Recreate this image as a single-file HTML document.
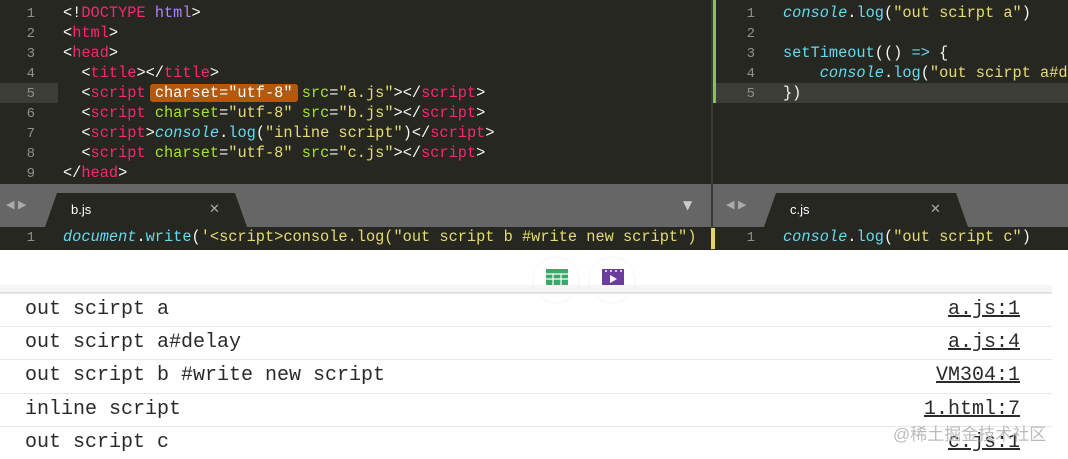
<!DOCTYPE html>
<html><head><meta charset="utf-8"><style>
*{margin:0;padding:0;box-sizing:border-box}
body{width:1068px;height:457px;background:#fff;position:relative;overflow:hidden;font-family:"Liberation Mono",monospace}
.ed{position:absolute;background:#262721}
.ln{position:absolute;color:#8f908a;font-size:14px;width:30px;text-align:right}
.c{position:absolute;white-space:pre;font-size:15.3px;color:#f8f8f2;line-height:20px}
.t{color:#f92672}.a{color:#a6e22e}.s{color:#e6db74}.k{color:#66d9ef;font-style:italic}.b{color:#66d9ef}
.tabbar{position:absolute;top:184px;height:43px;background:#666}
.tab{position:absolute;top:193px;height:34px;background:#262721;clip-path:polygon(12px 0,calc(100% - 12px) 0,100% 100%,0 100%);font-family:"Liberation Sans",sans-serif;color:#fff;font-size:13px}
.row{position:absolute;left:0;width:1052px;height:33px;border-top:1px solid #e8e8e8;font-size:20px;font-family:"Liberation Mono",monospace;color:#2a2a2a}
.row span{position:absolute;top:4px}
.src{right:32px;text-decoration:underline}
</style></head><body>
<div class="ed" style="left:0;top:0;width:711px;height:184px"></div>
<div class="ed" style="left:713px;top:0;width:355px;height:184px"></div>
<div style="position:absolute;left:711px;top:0;width:2px;height:184px;background:#3a3a36"></div>
<div style="position:absolute;left:0;top:83px;width:58px;height:20px;background:#3c3d37"></div>
<div style="position:absolute;left:716px;top:83px;width:352px;height:20px;background:#3c3d37"></div>
<div style="position:absolute;left:713px;top:0;width:3px;height:103px;background:#8bc34a"></div>
<div class="ln" style="left:5px;top:4px;line-height:20px">1<br>2<br>3<br>4<br>5<br>6<br>7<br>8<br>9</div>
<div style="position:absolute;left:150px;top:84px;width:148px;height:18px;background:#b3590f;border-radius:3px"></div>
<div class="c" style="left:63px;top:3px">&lt;!<span class="t">DOCTYPE</span> <span style="color:#ae81ff">html</span>&gt;
&lt;<span class="t">html</span>&gt;
&lt;<span class="t">head</span>&gt;
  &lt;<span class="t">title</span>&gt;&lt;/<span class="t">title</span>&gt;
  &lt;<span class="t">script</span> <span style="color:#fff">charset="utf-8"</span> <span class="a">src</span>=<span class="s">"a.js"</span>&gt;&lt;/<span class="t">script</span>&gt;
  &lt;<span class="t">script</span> <span class="a">charset</span>=<span class="s">"utf-8"</span> <span class="a">src</span>=<span class="s">"b.js"</span>&gt;&lt;/<span class="t">script</span>&gt;
  &lt;<span class="t">script</span>&gt;<span class="k">console</span>.<span class="b">log</span>(<span class="s">"inline script"</span>)&lt;/<span class="t">script</span>&gt;
  &lt;<span class="t">script</span> <span class="a">charset</span>=<span class="s">"utf-8"</span> <span class="a">src</span>=<span class="s">"c.js"</span>&gt;&lt;/<span class="t">script</span>&gt;
&lt;/<span class="t">head</span>&gt;</div>
<div class="ln" style="left:725px;top:4px;line-height:20px">1<br>2<br>3<br>4<br>5</div>
<div style="position:absolute;left:783px;top:0;width:285px;height:184px;overflow:hidden">
<div class="c" style="left:0;top:3px"><span class="k">console</span>.<span class="b">log</span>(<span class="s">"out scirpt a"</span>)

<span class="b">setTimeout</span>(() <span class="b">=&gt;</span> {
    <span class="k">console</span>.<span class="b">log</span>(<span class="s">"out scirpt a#delay"</span>)
})</div></div>
<div class="tabbar" style="left:0;width:711px"></div>
<div class="tabbar" style="left:713px;width:355px"></div>
<div style="position:absolute;left:711px;top:184px;width:2px;height:66px;background:#3a3a36"></div>
<div style="position:absolute;left:6px;top:198px;color:#aaa;font-size:11px;font-family:'DejaVu Sans'">◀ ▶</div>
<div style="position:absolute;left:726px;top:198px;color:#aaa;font-size:11px;font-family:'DejaVu Sans'">◀ ▶</div>
<div style="position:absolute;left:683px;top:198px;color:#ccc;font-size:12px;font-family:'DejaVu Sans'">▼</div>
<div class="tab" style="left:45px;width:202px"><span style="position:absolute;left:26px;top:9px">b.js</span><span style="position:absolute;left:164px;top:8px;color:#aaa">✕</span></div>
<div class="tab" style="left:764px;width:204px"><span style="position:absolute;left:26px;top:9px">c.js</span><span style="position:absolute;left:166px;top:8px;color:#aaa">✕</span></div>
<div class="ed" style="left:0;top:227px;width:711px;height:23px"></div>
<div class="ed" style="left:713px;top:227px;width:355px;height:23px"></div>
<div style="position:absolute;left:711px;top:228px;width:4px;height:21px;background:#e6d56b"></div>
<div class="ln" style="left:5px;top:228px;line-height:20px">1</div>
<div class="ln" style="left:725px;top:228px;line-height:20px">1</div>
<div class="c" style="left:63px;top:227px;width:648px;overflow:hidden"><span class="k">document</span>.<span class="b">write</span>(<span class="s">'&lt;script&gt;console.log("out script b #write new script")</span></div>
<div class="c" style="left:783px;top:227px"><span class="k">console</span>.<span class="b">log</span>(<span class="s">"out script c"</span>)</div>
<div style="position:absolute;left:534px;top:258px;width:44px;height:44px;border-radius:50%;background:#fff;box-shadow:0 0 3px #eee"></div>
<div style="position:absolute;left:590px;top:258px;width:44px;height:44px;border-radius:50%;background:#fff;box-shadow:0 0 3px #eee"></div>
<svg style="position:absolute;left:546px;top:269px" width="22" height="16"><rect width="22" height="16" fill="#3aa866"/><path d="M0 5H22M0 10H22M7 5V16M15 5V16" stroke="#fff" stroke-width="1.2"/></svg>
<svg style="position:absolute;left:602px;top:269px" width="22" height="16"><rect width="22" height="16" fill="#6a3d9a"/><path d="M3 2h2M8 2h2M13 2h2M18 2h2" stroke="#fff" stroke-width="1.5"/><path d="M8 6L15 10L8 14Z" fill="#fff"/></svg>
<div style="position:absolute;left:0;top:285px;width:1052px;height:8px;background:#f5f5f5;border-bottom:1px solid #ddd"></div>
<div class="row" style="top:293px"><span style="left:25px">out scirpt a</span><span class="src">a.js:1</span></div>
<div class="row" style="top:326px"><span style="left:25px">out scirpt a#delay</span><span class="src">a.js:4</span></div>
<div class="row" style="top:359px"><span style="left:25px">out script b #write new script</span><span class="src">VM304:1</span></div>
<div class="row" style="top:393px"><span style="left:25px">inline script</span><span class="src">1.html:7</span></div>
<div class="row" style="top:426px"><span style="left:25px">out script c</span><span class="src">c.js:1</span></div>
<div style="position:absolute;left:893px;top:420px;color:#bbb;font-size:17px;font-family:'Liberation Sans','Noto Sans CJK SC',sans-serif">@稀土掘金技术社区</div>
</body></html>
